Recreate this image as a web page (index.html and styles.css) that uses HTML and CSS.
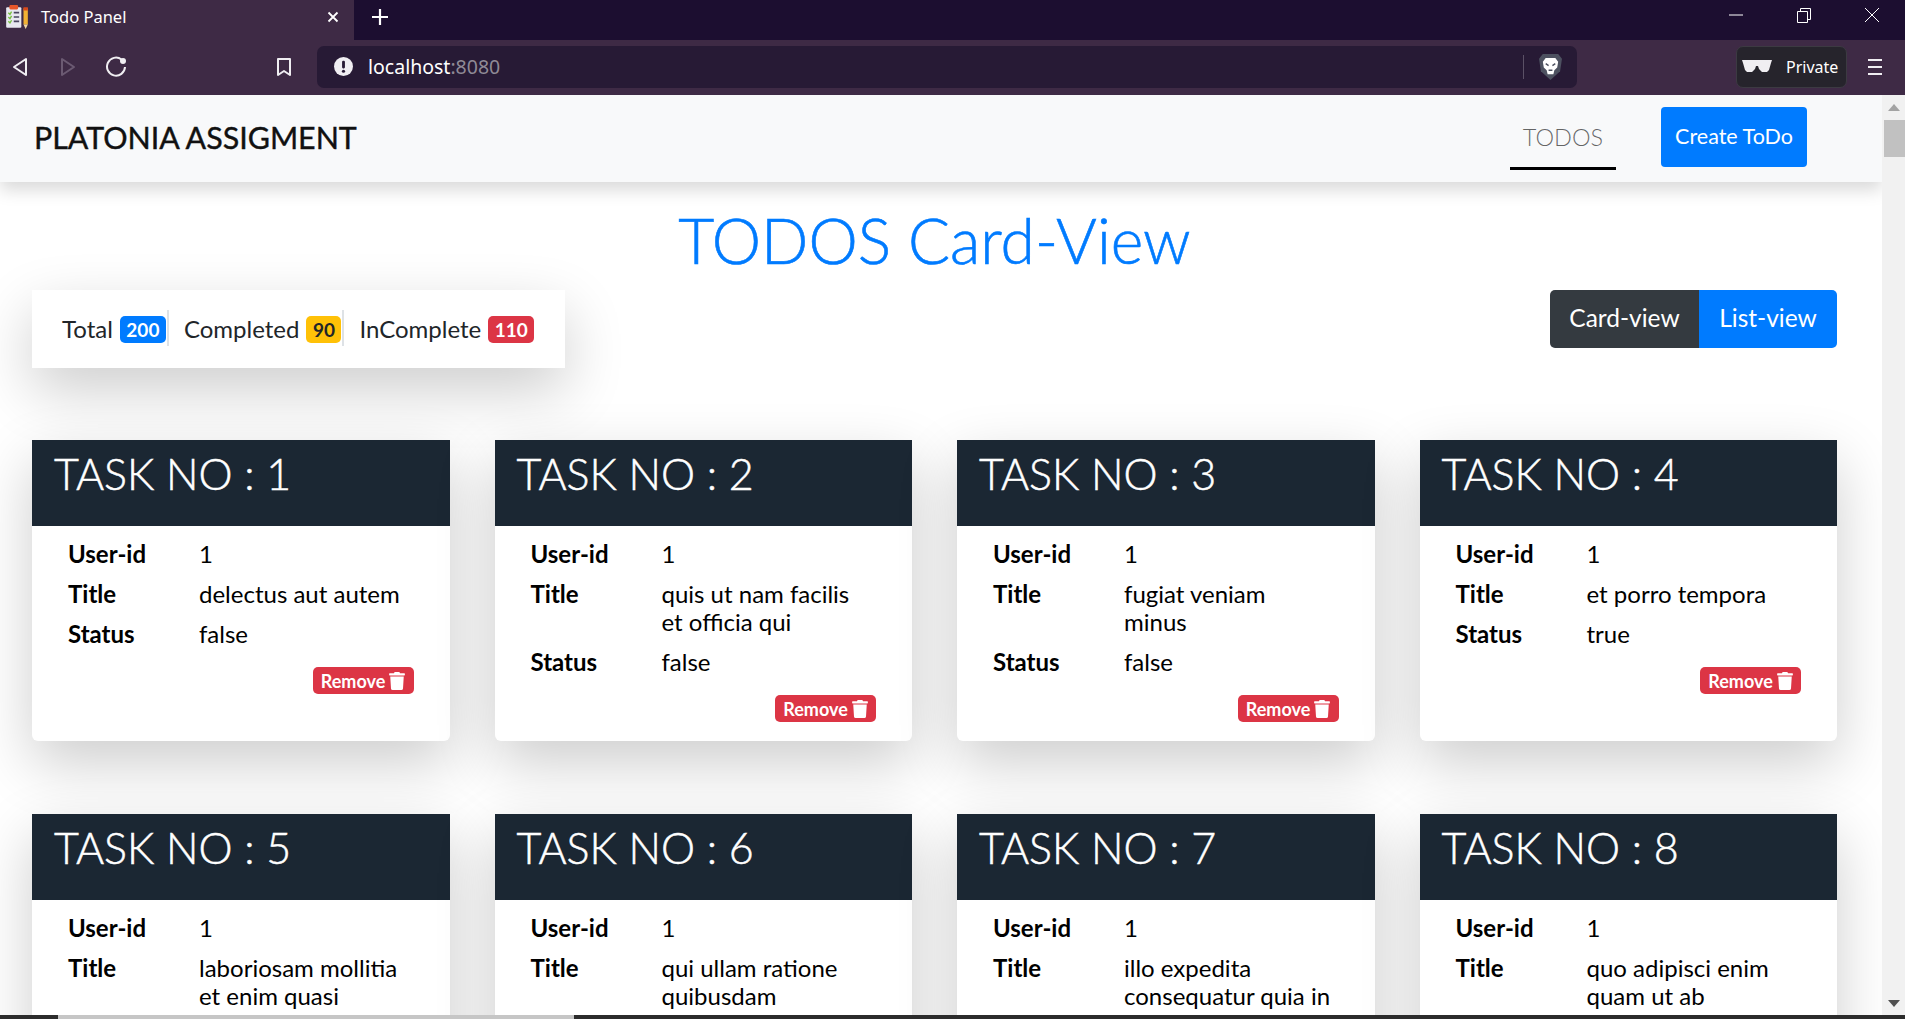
FILE: index.html
```html
<!DOCTYPE html>
<html lang="en">
<head>
<meta charset="utf-8">
<title>Todo Panel</title>
<link rel="stylesheet" href="styles.css">
</head>
<body>
<div class="browser">
  <div class="tabstrip">
    <div class="tab">
      <svg class="favicon" viewBox="0 0 24 24"><rect x="2" y="3" width="14" height="19" rx="1" fill="#e8e8f0"/><rect x="5" y="1" width="8" height="4" rx="1" fill="#e8562a"/><path d="M4 8l1.500 1.500L7 7M4 12l1.500 1.500L7 11M4 16l1.500 1.500L7 15" stroke="#7ac143" stroke-width="1.300" fill="none"/><path d="M9 8h5M9 12h5M9 16h5" stroke="#4a4560" stroke-width="1.500"/><rect x="18" y="4" width="4" height="15" fill="#f2b233"/><rect x="18" y="3" width="4" height="3" fill="#d9481c"/><path d="M18 19h4l-2 4z" fill="#f2d9a6"/></svg>
      <span class="tab-title">Todo Panel</span>
      <svg class="tab-close" viewBox="0 0 12 12"><path d="M1.500 1.500l9 9M10.500 1.500l-9 9" stroke="#fff" stroke-width="1.800"/></svg>
    </div>
    <svg class="tab-new" viewBox="0 0 18 18"><path d="M9 1v16M1 9h16" stroke="#fff" stroke-width="2.200"/></svg>
    <div class="window-controls">
      <svg class="win-icon" viewBox="0 0 16 16"><path d="M1 8h14" stroke="#fff"/></svg>
      <svg class="win-icon" viewBox="0 0 16 16"><path d="M1.500 4.500h10v11h-10zM4.500 4.500v-3h10v11h-3" stroke="#fff" fill="none"/></svg>
      <svg class="win-icon" viewBox="0 0 16 16"><path d="M1 1l14 14M15 1L1 15" stroke="#fff"/></svg>
    </div>
  </div>
  <div class="toolbar">
    <svg class="tool tool-back" viewBox="0 0 16 20"><path d="M14 2v16L2 10z" fill="none" stroke="#f0eef2" stroke-width="2" stroke-linejoin="round"/></svg>
    <svg class="tool tool-forward" viewBox="0 0 16 20"><path d="M2 2v16l12-8z" fill="none" stroke="#6b5a72" stroke-width="2" stroke-linejoin="round"/></svg>
    <svg class="tool tool-reload" viewBox="0 0 22 22"><path d="M16.500 3.500A9 9 0 1 0 20 11" fill="none" stroke="#f0eef2" stroke-width="2"/><circle cx="18" cy="5" r="3" fill="#f0eef2"/></svg>
    <svg class="tool tool-bookmark" viewBox="0 0 16 20"><path d="M2 2h12v16l-6-4-6 4z" fill="none" stroke="#f0eef2" stroke-width="2" stroke-linejoin="round"/></svg>
    <div class="urlbar">
      <svg class="url-info" viewBox="0 0 20 20"><circle cx="10" cy="10" r="10" fill="#f0eef2"/><rect x="8.500" y="4" width="3" height="8" rx="1.200" fill="#271a35"/><circle cx="10" cy="15" r="1.700" fill="#271a35"/></svg>
      <span class="url-text">localhost<span class="url-port">:8080</span></span>
      <span class="url-divider"></span>
      <svg class="url-lion" viewBox="0 0 24 28"><path d="M4 1h16l4 5-2 13-10 9-10-9L0 6z" fill="#4d5160"/><path d="M7 5h10l3 4-1 6-3 3-1 4h-6l-1-4-3-3-1-6z" fill="#fff"/><path d="M7 11l3 2M17 11l-3 2M10 18h4" stroke="#4d5160" stroke-width="1.500"/></svg>
    </div>
    <div class="private">
      <svg class="private-glasses" viewBox="0 0 30 13"><path d="M0 0h30l-1 3-2 7-2 2h-5l-3-3-1-3h-2l-1 3-3 3H5l-2-2-2-7z" fill="#f0eef2"/></svg>
      <span>Private</span>
    </div>
    <svg class="tool-menu" viewBox="0 0 14 18"><path d="M0 2h14M0 9h14M0 16h14" stroke="#f0eef2" stroke-width="2"/></svg>
  </div>
</div>

<div class="viewport">
  <div class="page">
    <nav class="navbar">
      <a class="brand">PLATONIA ASSIGMENT</a>
      <div class="nav-right">
        <a class="nav-link">TODOS</a>
        <button class="btn-create">Create ToDo</button>
      </div>
    </nav>
    <main class="content">
      <h1 class="heading">TODOS Card-View</h1>
      <div class="toprow">
        <div class="stats">
          <span class="stat stat-divided">Total <span class="badge badge-blue">200</span></span>
          <span class="stat stat-divided">Completed <span class="badge badge-yellow">90</span></span>
          <span class="stat">InComplete <span class="badge badge-red">110</span></span>
        </div>
        <div class="viewswitch">
          <button class="switch switch-dark">Card-view</button>
          <button class="switch switch-blue">List-view</button>
        </div>
      </div>
      <div class="cards">
        <article class="card"><h2 class="card-head">TASK NO : 1</h2><div class="card-body"><dl class="rows"><dt>User-id</dt><dd>1</dd><dt>Title</dt><dd>delectus aut autem</dd><dt>Status</dt><dd>false</dd></dl><div class="actions"><button class="remove">Remove <svg class="trash" viewBox="0 0 448 512"><path d="M432 32H312l-9.400-18.700A24 24 0 0 0 281.100 0H166.800a23.720 23.720 0 0 0-21.400 13.300L136 32H16A16 16 0 0 0 0 48v32a16 16 0 0 0 16 16h416a16 16 0 0 0 16-16V48a16 16 0 0 0-16-16zM53.200 467a48 48 0 0 0 47.900 45h245.800a48 48 0 0 0 47.900-45L416 128H32z"/></svg></button></div></div></article>
        <article class="card"><h2 class="card-head">TASK NO : 2</h2><div class="card-body"><dl class="rows"><dt>User-id</dt><dd>1</dd><dt>Title</dt><dd>quis ut nam facilis et officia qui</dd><dt>Status</dt><dd>false</dd></dl><div class="actions"><button class="remove">Remove <svg class="trash" viewBox="0 0 448 512"><path d="M432 32H312l-9.400-18.700A24 24 0 0 0 281.100 0H166.800a23.720 23.720 0 0 0-21.400 13.300L136 32H16A16 16 0 0 0 0 48v32a16 16 0 0 0 16 16h416a16 16 0 0 0 16-16V48a16 16 0 0 0-16-16zM53.200 467a48 48 0 0 0 47.900 45h245.800a48 48 0 0 0 47.900-45L416 128H32z"/></svg></button></div></div></article>
        <article class="card"><h2 class="card-head">TASK NO : 3</h2><div class="card-body"><dl class="rows"><dt>User-id</dt><dd>1</dd><dt>Title</dt><dd>fugiat veniam minus</dd><dt>Status</dt><dd>false</dd></dl><div class="actions"><button class="remove">Remove <svg class="trash" viewBox="0 0 448 512"><path d="M432 32H312l-9.400-18.700A24 24 0 0 0 281.100 0H166.800a23.720 23.720 0 0 0-21.400 13.300L136 32H16A16 16 0 0 0 0 48v32a16 16 0 0 0 16 16h416a16 16 0 0 0 16-16V48a16 16 0 0 0-16-16zM53.200 467a48 48 0 0 0 47.900 45h245.800a48 48 0 0 0 47.900-45L416 128H32z"/></svg></button></div></div></article>
        <article class="card"><h2 class="card-head">TASK NO : 4</h2><div class="card-body"><dl class="rows"><dt>User-id</dt><dd>1</dd><dt>Title</dt><dd>et porro tempora</dd><dt>Status</dt><dd>true</dd></dl><div class="actions"><button class="remove">Remove <svg class="trash" viewBox="0 0 448 512"><path d="M432 32H312l-9.400-18.700A24 24 0 0 0 281.100 0H166.800a23.720 23.720 0 0 0-21.400 13.300L136 32H16A16 16 0 0 0 0 48v32a16 16 0 0 0 16 16h416a16 16 0 0 0 16-16V48a16 16 0 0 0-16-16zM53.200 467a48 48 0 0 0 47.900 45h245.800a48 48 0 0 0 47.900-45L416 128H32z"/></svg></button></div></div></article>
        <article class="card"><h2 class="card-head">TASK NO : 5</h2><div class="card-body"><dl class="rows"><dt>User-id</dt><dd>1</dd><dt>Title</dt><dd>laboriosam mollitia et enim quasi</dd></dl></div></article>
        <article class="card"><h2 class="card-head">TASK NO : 6</h2><div class="card-body"><dl class="rows"><dt>User-id</dt><dd>1</dd><dt>Title</dt><dd>qui ullam ratione quibusdam</dd></dl></div></article>
        <article class="card"><h2 class="card-head">TASK NO : 7</h2><div class="card-body"><dl class="rows"><dt>User-id</dt><dd>1</dd><dt>Title</dt><dd>illo expedita consequatur quia in</dd></dl></div></article>
        <article class="card"><h2 class="card-head">TASK NO : 8</h2><div class="card-body"><dl class="rows"><dt>User-id</dt><dd>1</dd><dt>Title</dt><dd>quo adipisci enim quam ut ab</dd></dl></div></article>
      </div>
    </main>
  </div>
  <div class="scrollbar">
    <span class="arrow-up"></span>
    <span class="thumb"></span>
    <span class="arrow-down"></span>
  </div>
</div>
<div class="taskstrip"><span class="taskstrip-item"></span></div>
</body>
</html>
```

FILE: styles.css
```css
* { box-sizing: border-box; }
html, body { margin: 0; height: 100%; overflow: hidden; }
body {
  display: flex;
  flex-direction: column;
  font-family: "Lato", "Liberation Sans", sans-serif;
  color: #212529;
  background: #fff;
}

/* browser chrome */
.browser { flex: none; font-family: "Noto Sans", "Open Sans", sans-serif; color: #fff; }
.tabstrip { height: 40px; background: #1c0e30; display: flex; align-items: center; }
.tab { width: 354px; height: 40px; background: #3e2a45; display: flex; align-items: center; padding: 0 15px 6px 4px; }
.favicon { width: 26px; height: 28px; flex: none; }
.tab-title { font-size: 16.500px; margin-left: 11px; padding-bottom: 2px; flex: 1; }
.tab-close { width: 12px; height: 12px; }
.tab-new { width: 18px; height: 18px; margin: -6px 0 0 17px; }
.window-controls { margin-left: auto; display: flex; gap: 52px; padding: 0 25px 10px 0; }
.win-icon { width: 16px; height: 16px; }
.toolbar { height: 55px; background: #3e2a45; display: flex; align-items: center; padding-bottom: 2px; }
.tool { flex: none; }
.tool-back { width: 16px; height: 20px; margin-left: 12px; }
.tool-forward { width: 16px; height: 20px; margin-left: 32px; }
.tool-reload { width: 22px; height: 22px; margin-left: 29px; }
.tool-bookmark { width: 16px; height: 20px; margin-left: 149px; }
.urlbar { width: 1260px; height: 42px; margin-left: 25px; background: #271a35; border-radius: 7px; display: flex; align-items: center; padding: 0 15px 0 17px; }
.url-info { width: 19px; height: 19px; flex: none; }
.url-text { font-size: 19.500px; margin-left: 15px; flex: 1; }
.url-port { color: #8f8a96; }
.url-divider { width: 1px; height: 24px; background: #5b5166; }
.url-lion { width: 23px; height: 27px; margin-left: 15px; }
.private { width: 111px; height: 42px; margin-left: 159px; background: #26242c; border: 1px solid #3c3a42; border-radius: 7px; display: flex; align-items: center; font-size: 16px; padding-left: 5px; }
.private-glasses { width: 30px; height: 13px; margin-right: 14px; }
.tool-menu { width: 14px; height: 18px; margin-left: 21px; }

/* viewport */
.viewport { flex: 1; min-height: 0; display: flex; }
.page { flex: 1; min-width: 0; overflow: hidden; }
.scrollbar { flex: none; width: 23px; background: #f1f1f1; display: flex; flex-direction: column; align-items: center; padding-top: 9px; padding-bottom: 8px; }
.arrow-up { width: 0; height: 0; border: 6px solid transparent; border-top: 0; border-bottom: 7px solid #a3a3a3; }
.thumb { width: 21px; height: 37px; margin: 9px 0 0 2px; background: #c1c1c1; }
.arrow-down { width: 0; height: 0; margin-top: auto; border: 6px solid transparent; border-bottom: 0; border-top: 7px solid #505050; }
.taskstrip { flex: none; height: 4px; background: #2c2c2c; padding-left: 58px; }
.taskstrip-item { display: block; width: 516px; height: 4px; background: #c6c6c6; }

/* navbar */
.navbar { height: 87px; background: #f8f9fa; box-shadow: 0 8px 16px rgba(0,0,0,.15); display: flex; align-items: center; justify-content: space-between; padding: 0 75px 0 34px; position: relative; }
.brand { font-size: 30.400px; color: #111; padding-bottom: 4px; -webkit-text-stroke: .4px #111; }
.nav-right { display: flex; align-items: center; gap: 45px; }
.nav-link { width: 106px; height: 63px; display: flex; align-items: center; justify-content: center; font-size: 23.500px; font-weight: 300; color: rgba(0,0,0,.6); border-bottom: 3px solid #000; }
.btn-create { width: 146px; height: 60px; border: 0; border-radius: 4px; background: #007bff; color: #fff; font: inherit; font-size: 21.500px; margin-top: -3px; padding: 0 0 2px; }

/* content */
.content { padding: 0 45px 0 32px; }
.heading { margin: 0; height: 108px; padding-top: 7px; display: flex; align-items: center; justify-content: center; font-size: 62.300px; font-weight: 300; color: #007bff; -webkit-text-stroke: .6px #007bff; }
.toprow { display: flex; justify-content: space-between; align-items: flex-start; margin-bottom: 72px; }
.stats { height: 78px; width: 533px; background: #fff; box-shadow: 0 22px 60px rgba(0,0,0,.2); display: flex; align-items: center; padding: 0 0 2px 30px; }
.stat { font-size: 24px; height: 36px; display: flex; align-items: center; gap: 7px; }
.stat-divided { border-right: 2px solid #dee2e6; padding-right: 1px; margin-right: 15px; }
.badge { height: 27px; padding: 0 6.500px; border-radius: 5px; font-size: 19px; font-weight: 700; display: flex; align-items: center; margin-top: 2px; }
.badge-blue { background: #007bff; color: #fff; }
.badge-yellow { background: #ffc107; color: #212529; }
.badge-red { background: #dc3545; color: #fff; }
.viewswitch { display: flex; height: 58px; border-radius: 5px; overflow: hidden; }
.switch { border: 0; font: inherit; font-size: 24.500px; color: #fff; padding: 0 0 3px; }
.switch-dark { width: 149px; background: #343a40; }
.switch-blue { width: 138px; background: #007bff; }

.cards { display: grid; grid-template-columns: repeat(4, 1fr); column-gap: 45px; row-gap: 73px; }
.card { background: #fff; border-radius: 0 0 6px 6px; box-shadow: 0 22px 60px rgba(0,0,0,.2); min-height: 301px; }
.card-head { margin: 0; height: 86px; background: #1b2733; color: #fff; font-size: 43px; font-weight: 300; padding: 7px 0 0 22px; line-height: 54px; -webkit-text-stroke: .5px #fff; }
.card-body { padding: 14px 36px 0; }
.rows { margin: 0; display: grid; grid-template-columns: 131px 1fr; row-gap: 12px; font-size: 24px; line-height: 28px; color: #000; }
.rows dt { font-weight: 700; }
.rows dd { margin: 0; padding-right: 7px; }
.actions { display: flex; justify-content: flex-end; margin-top: 19px; }
.remove { height: 27px; width: 101px; border: 0; border-radius: 5px; background: #dc3545; color: #fff; font: inherit; font-size: 18px; font-weight: 700; display: flex; align-items: center; justify-content: center; gap: 4px; padding: 0; }
.trash { width: 16px; height: 18px; fill: #fff; }
```
